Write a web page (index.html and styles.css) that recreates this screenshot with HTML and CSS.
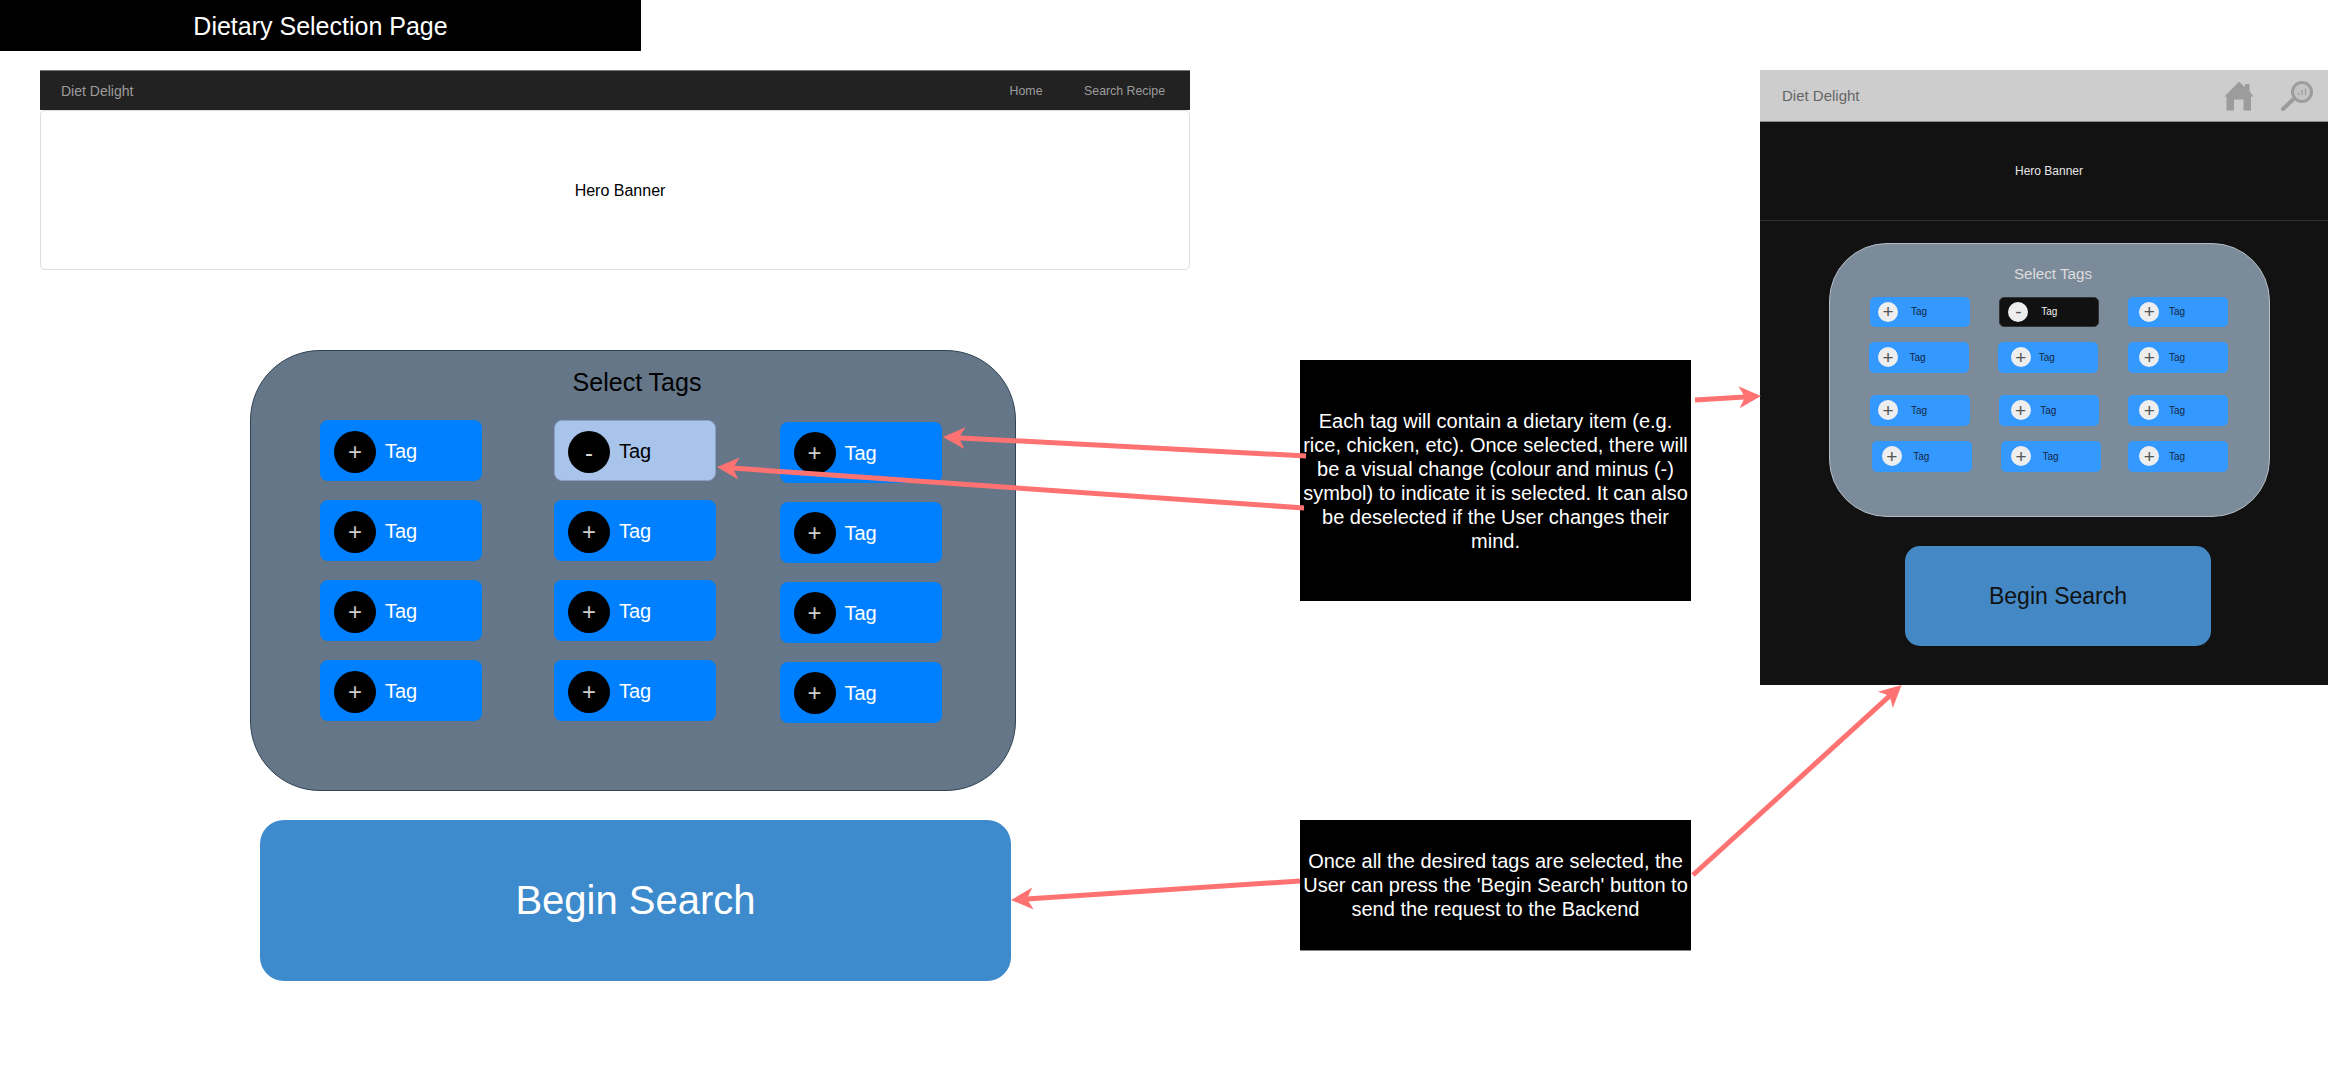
FILE: index.html
```html
<!DOCTYPE html>
<html lang="en">
<head>
<meta charset="utf-8">
<title>Dietary Selection Page</title>
<link rel="stylesheet" href="styles.css">
</head>
<body>
<main class="canvas">
  <h1 class="page-title">Dietary Selection Page</h1>

  <section class="desktop-head">
    <nav class="d-nav">
      <span class="d-brand">Diet Delight</span>
      <span class="d-links"><a>Home</a><a>Search Recipe</a></span>
    </nav>
    <div class="d-hero">Hero Banner</div>
  </section>

  <section class="d-panel">
    <h2 class="d-panel-title">Select Tags</h2>
    <div class="d-grid">
      <div class="d-tag"><span class="d-dot">+</span><span>Tag</span></div>
      <div class="d-tag is-picked"><span class="d-dot">-</span><span>Tag</span></div>
      <div class="d-tag low"><span class="d-dot">+</span><span>Tag</span></div>
      <div class="d-tag"><span class="d-dot">+</span><span>Tag</span></div>
      <div class="d-tag"><span class="d-dot">+</span><span>Tag</span></div>
      <div class="d-tag low"><span class="d-dot">+</span><span>Tag</span></div>
      <div class="d-tag"><span class="d-dot">+</span><span>Tag</span></div>
      <div class="d-tag"><span class="d-dot">+</span><span>Tag</span></div>
      <div class="d-tag low"><span class="d-dot">+</span><span>Tag</span></div>
      <div class="d-tag"><span class="d-dot">+</span><span>Tag</span></div>
      <div class="d-tag"><span class="d-dot">+</span><span>Tag</span></div>
      <div class="d-tag low"><span class="d-dot">+</span><span>Tag</span></div>
    </div>
  </section>

  <button class="d-search">Begin Search</button>

  <p class="note note-tags">Each tag will contain a dietary item (e.g.<br>rice, chicken, etc). Once selected, there will<br>be a visual change (colour and minus (-)<br>symbol) to indicate it is selected. It can also<br>be deselected if the User changes their<br>mind.</p>

  <p class="note note-search">Once all the desired tags are selected, the<br>User can press the 'Begin Search' button to<br>send the request to the Backend</p>

  <section class="mobile">
    <nav class="m-nav">
      <span class="m-brand">Diet Delight</span>
      <span class="m-icons">
        <svg class="m-home" width="30" height="30" viewBox="0 0 30 30" aria-hidden="true">
          <path d="M15 0.7 L21 6 V3 H25.500 V10 L29.500 15.500 H27 V29.500 H19.500 V18.500 H10 V29.500 H2.500 V15.500 H0.500 Z"/>
        </svg>
        <svg class="m-find" width="34" height="32" viewBox="0 0 34 32" aria-hidden="true">
          <circle class="lens" cx="22" cy="12" r="9.500"/>
          <line class="handle" x1="13" y1="19.500" x2="3" y2="29"/>
          <path class="bars" d="M18.500 15 V12.500 M22 15 V10 M25.500 15 V8.500"/>
        </svg>
      </span>
    </nav>
    <div class="m-hero">Hero Banner</div>
    <div class="m-panel">
      <h2 class="m-panel-title">Select Tags</h2>
      <div class="m-grid">
        <div class="m-tag"><span class="m-dot">+</span><span>Tag</span></div>
        <div class="m-tag is-picked"><span class="m-dot">-</span><span>Tag</span></div>
        <div class="m-tag pad-c"><span class="m-dot">+</span><span>Tag</span></div>

        <div class="m-tag out-l pad-b"><span class="m-dot">+</span><span>Tag</span></div>
        <div class="m-tag out-l pad-d"><span class="m-dot">+</span><span>Tag</span></div>
        <div class="m-tag pad-c"><span class="m-dot">+</span><span>Tag</span></div>

        <div class="m-tag"><span class="m-dot">+</span><span>Tag</span></div>
        <div class="m-tag pad-c"><span class="m-dot">+</span><span>Tag</span></div>
        <div class="m-tag pad-c"><span class="m-dot">+</span><span>Tag</span></div>

        <div class="m-tag out-r pad-b"><span class="m-dot">+</span><span>Tag</span></div>
        <div class="m-tag out-r pad-b"><span class="m-dot">+</span><span>Tag</span></div>
        <div class="m-tag pad-c"><span class="m-dot">+</span><span>Tag</span></div>
      </div>
    </div>
    <button class="m-search">Begin Search</button>
  </section>

  <svg class="arrows" width="2328" height="1081" viewBox="0 0 2328 1081" aria-hidden="true">
    <defs>
      <marker id="head" markerUnits="userSpaceOnUse" markerWidth="24" markerHeight="24" refX="14" refY="12" orient="auto">
        <path class="head" d="M0 1 L22 12 L0 23 L6 12 Z"/>
      </marker>
    </defs>
    <line class="arrow" x1="1306" y1="456" x2="951" y2="437.400" marker-end="url(#head)"/>
    <line class="arrow" x1="1304" y1="508" x2="725" y2="467.600" marker-end="url(#head)"/>
    <line class="arrow" x1="1695" y1="400" x2="1753" y2="396.500" marker-end="url(#head)"/>
    <line class="arrow" x1="1300" y1="881" x2="1019" y2="899.500" marker-end="url(#head)"/>
    <line class="arrow" x1="1693" y1="875" x2="1895.700" y2="690.400" marker-end="url(#head)"/>
  </svg>
</main>
</body>
</html>
```

FILE: styles.css
```css
* { box-sizing: border-box; }

html, body { margin: 0; background: #fff; }

body { font-family: "Liberation Sans", Arial, sans-serif; }

.canvas {
  position: relative;
  width: 2328px;
  height: 1081px;
  overflow: hidden;
}

/* Diagram nodes on the free canvas */
.page-title,
.desktop-head,
.d-panel,
.d-search,
.note,
.mobile,
.arrows { position: absolute; }

.page-title {
  left: 0;
  top: 0;
  width: 641px;
  height: 51px;
  margin: 0;
  background: #000;
  color: #fff;
  font-size: 25px;
  font-weight: 400;
  line-height: 53px;
  text-align: center;
}

/* Desktop header */
.desktop-head {
  left: 40px;
  top: 70px;
  width: 1150px;
}

.d-nav {
  display: flex;
  align-items: center;
  justify-content: space-between;
  height: 40px;
  padding: 0 25px 0 21px;
  background: #222;
  border-top: 1px solid #777;
  color: #9d9d9d;
}

.d-brand { font-size: 14px; }

.d-links {
  display: flex;
  gap: 41.500px;
  font-size: 12.350px;
}

.d-hero {
  display: flex;
  align-items: center;
  justify-content: center;
  height: 160px;
  padding: 2px 0 0 10px;
  border: 1px solid #ddd;
  border-radius: 5px;
  background: #fff;
  color: #000;
  font-size: 16px;
}

/* Desktop tag panel */
.d-panel {
  left: 250px;
  top: 350px;
  width: 766px;
  height: 441px;
  background: #647687;
  border: 1px solid #314354;
  border-radius: 70px;
}

.d-panel-title {
  margin: 15px 0 0 8px;
  color: #000;
  font-size: 25px;
  font-weight: 400;
  line-height: 32px;
  text-align: center;
}

.d-grid {
  display: grid;
  grid-template-columns: 234px 225.500px 162px;
  grid-auto-rows: 61px;
  row-gap: 19px;
  margin: 22px 0 0 69px;
}

.d-tag {
  display: flex;
  align-items: center;
  gap: 9px;
  width: 162px;
  height: 61px;
  padding: 2px 0 0 14px;
  background: #007fff;
  border-radius: 8px;
  color: #fff;
  font-size: 20px;
}

.d-tag.low { margin-top: 1.500px; }

.d-tag.is-picked {
  background: #a9c4eb;
  border: 1px solid #8b9fc4;
  padding-left: 13px;
  color: #000;
}

.d-dot {
  display: flex;
  align-items: center;
  justify-content: center;
  width: 42px;
  height: 42px;
  background: #000;
  border-radius: 50%;
  color: #ccc;
  font-size: 24px;
  line-height: 1;
}

.is-picked .d-dot {
  padding-top: 3px;
  color: #ddd;
}

.d-search {
  left: 260px;
  top: 820px;
  width: 751px;
  height: 161px;
  padding: 0;
  border: 0;
  border-radius: 24px;
  background: #3d8acd;
  color: #fff;
  font-family: inherit;
  font-size: 40px;
}

/* Notes */
.note {
  display: flex;
  align-items: center;
  justify-content: center;
  left: 1300px;
  width: 391px;
  margin: 0;
  background: #000;
  color: #fff;
  font-size: 20px;
  line-height: 24px;
  text-align: center;
}

.note-tags { top: 360px; height: 241px; }

.note-search {
  top: 820px;
  height: 131px;
  border-bottom: 1px solid #888;
}

/* Mobile mockup */
.mobile {
  left: 1760px;
  top: 70px;
  width: 568px;
  height: 615px;
  background: #121212;
}

.m-nav {
  display: flex;
  align-items: center;
  justify-content: space-between;
  height: 52px;
  padding: 0 14px 0 22px;
  background: #cdcdcd;
  border-bottom: 1px solid #8c8c8c;
  color: #666;
}

.m-brand { font-size: 15px; }

.m-icons {
  display: flex;
  align-items: center;
  gap: 26.500px;
}

.m-home { fill: #9c9c9c; }

.m-find .lens {
  fill: #c4c4c4;
  stroke: #9c9c9c;
  stroke-width: 3px;
}

.m-find .handle {
  stroke: #9c9c9c;
  stroke-width: 4px;
  stroke-linecap: round;
}

.m-find .bars {
  fill: none;
  stroke: #9c9c9c;
  stroke-width: 1.200px;
}

.m-hero {
  display: flex;
  align-items: center;
  justify-content: center;
  height: 99px;
  padding-left: 10px;
  border-bottom: 1px solid #333;
  color: #e6e6e6;
  font-size: 12px;
}

.m-panel {
  width: 441px;
  height: 274px;
  margin: 22px 0 0 69px;
  padding-top: 20px;
  background: #7c8b9a;
  border: 1px solid #b4bdc6;
  border-radius: 58px;
}

.m-panel-title {
  margin: 0 0 0 7px;
  color: #dcdcdc;
  font-size: 15.200px;
  font-weight: 400;
  line-height: 20px;
  text-align: center;
}

.m-grid {
  display: grid;
  grid-template-columns: 129.300px 128.700px 100px;
  grid-template-rows: 45.500px 53px 46px 30.500px;
  margin: 12.500px 0 0 40px;
}

.m-tag {
  --p: 8px;
  display: flex;
  align-items: center;
  gap: calc(21px - var(--p));
  width: 100px;
  height: 30.500px;
  padding-left: var(--p);
  background: #3399ff;
  border-radius: 5px;
  color: #14263f;
  font-size: 10px;
}

.pad-b { --p: 9.500px; }
.pad-c { --p: 11.300px; }
.pad-d { --p: 13px; }

.m-tag.out-l { margin-left: -1.500px; }
.m-tag.out-r { margin-left: 2.200px; }

.m-tag.is-picked {
  background: #111;
  border: 1px solid #333;
  color: #eee;
}

.m-dot {
  display: flex;
  flex: none;
  align-items: center;
  justify-content: center;
  width: 20px;
  height: 20px;
  background: #eee;
  border-radius: 50%;
  color: #555;
  font-size: 19px;
  line-height: 1;
}

.m-search {
  display: block;
  width: 306px;
  height: 100px;
  margin: 29px 0 0 145px;
  padding: 0;
  border: 0;
  border-radius: 15px;
  background: #4488c5;
  color: #111;
  font-family: inherit;
  font-size: 23px;
}

/* Arrows drawn over everything */
.arrows {
  left: 0;
  top: 0;
  pointer-events: none;
}

.arrow {
  stroke: #ff7272;
  stroke-width: 5px;
}

.head { fill: #ff7272; }
```
